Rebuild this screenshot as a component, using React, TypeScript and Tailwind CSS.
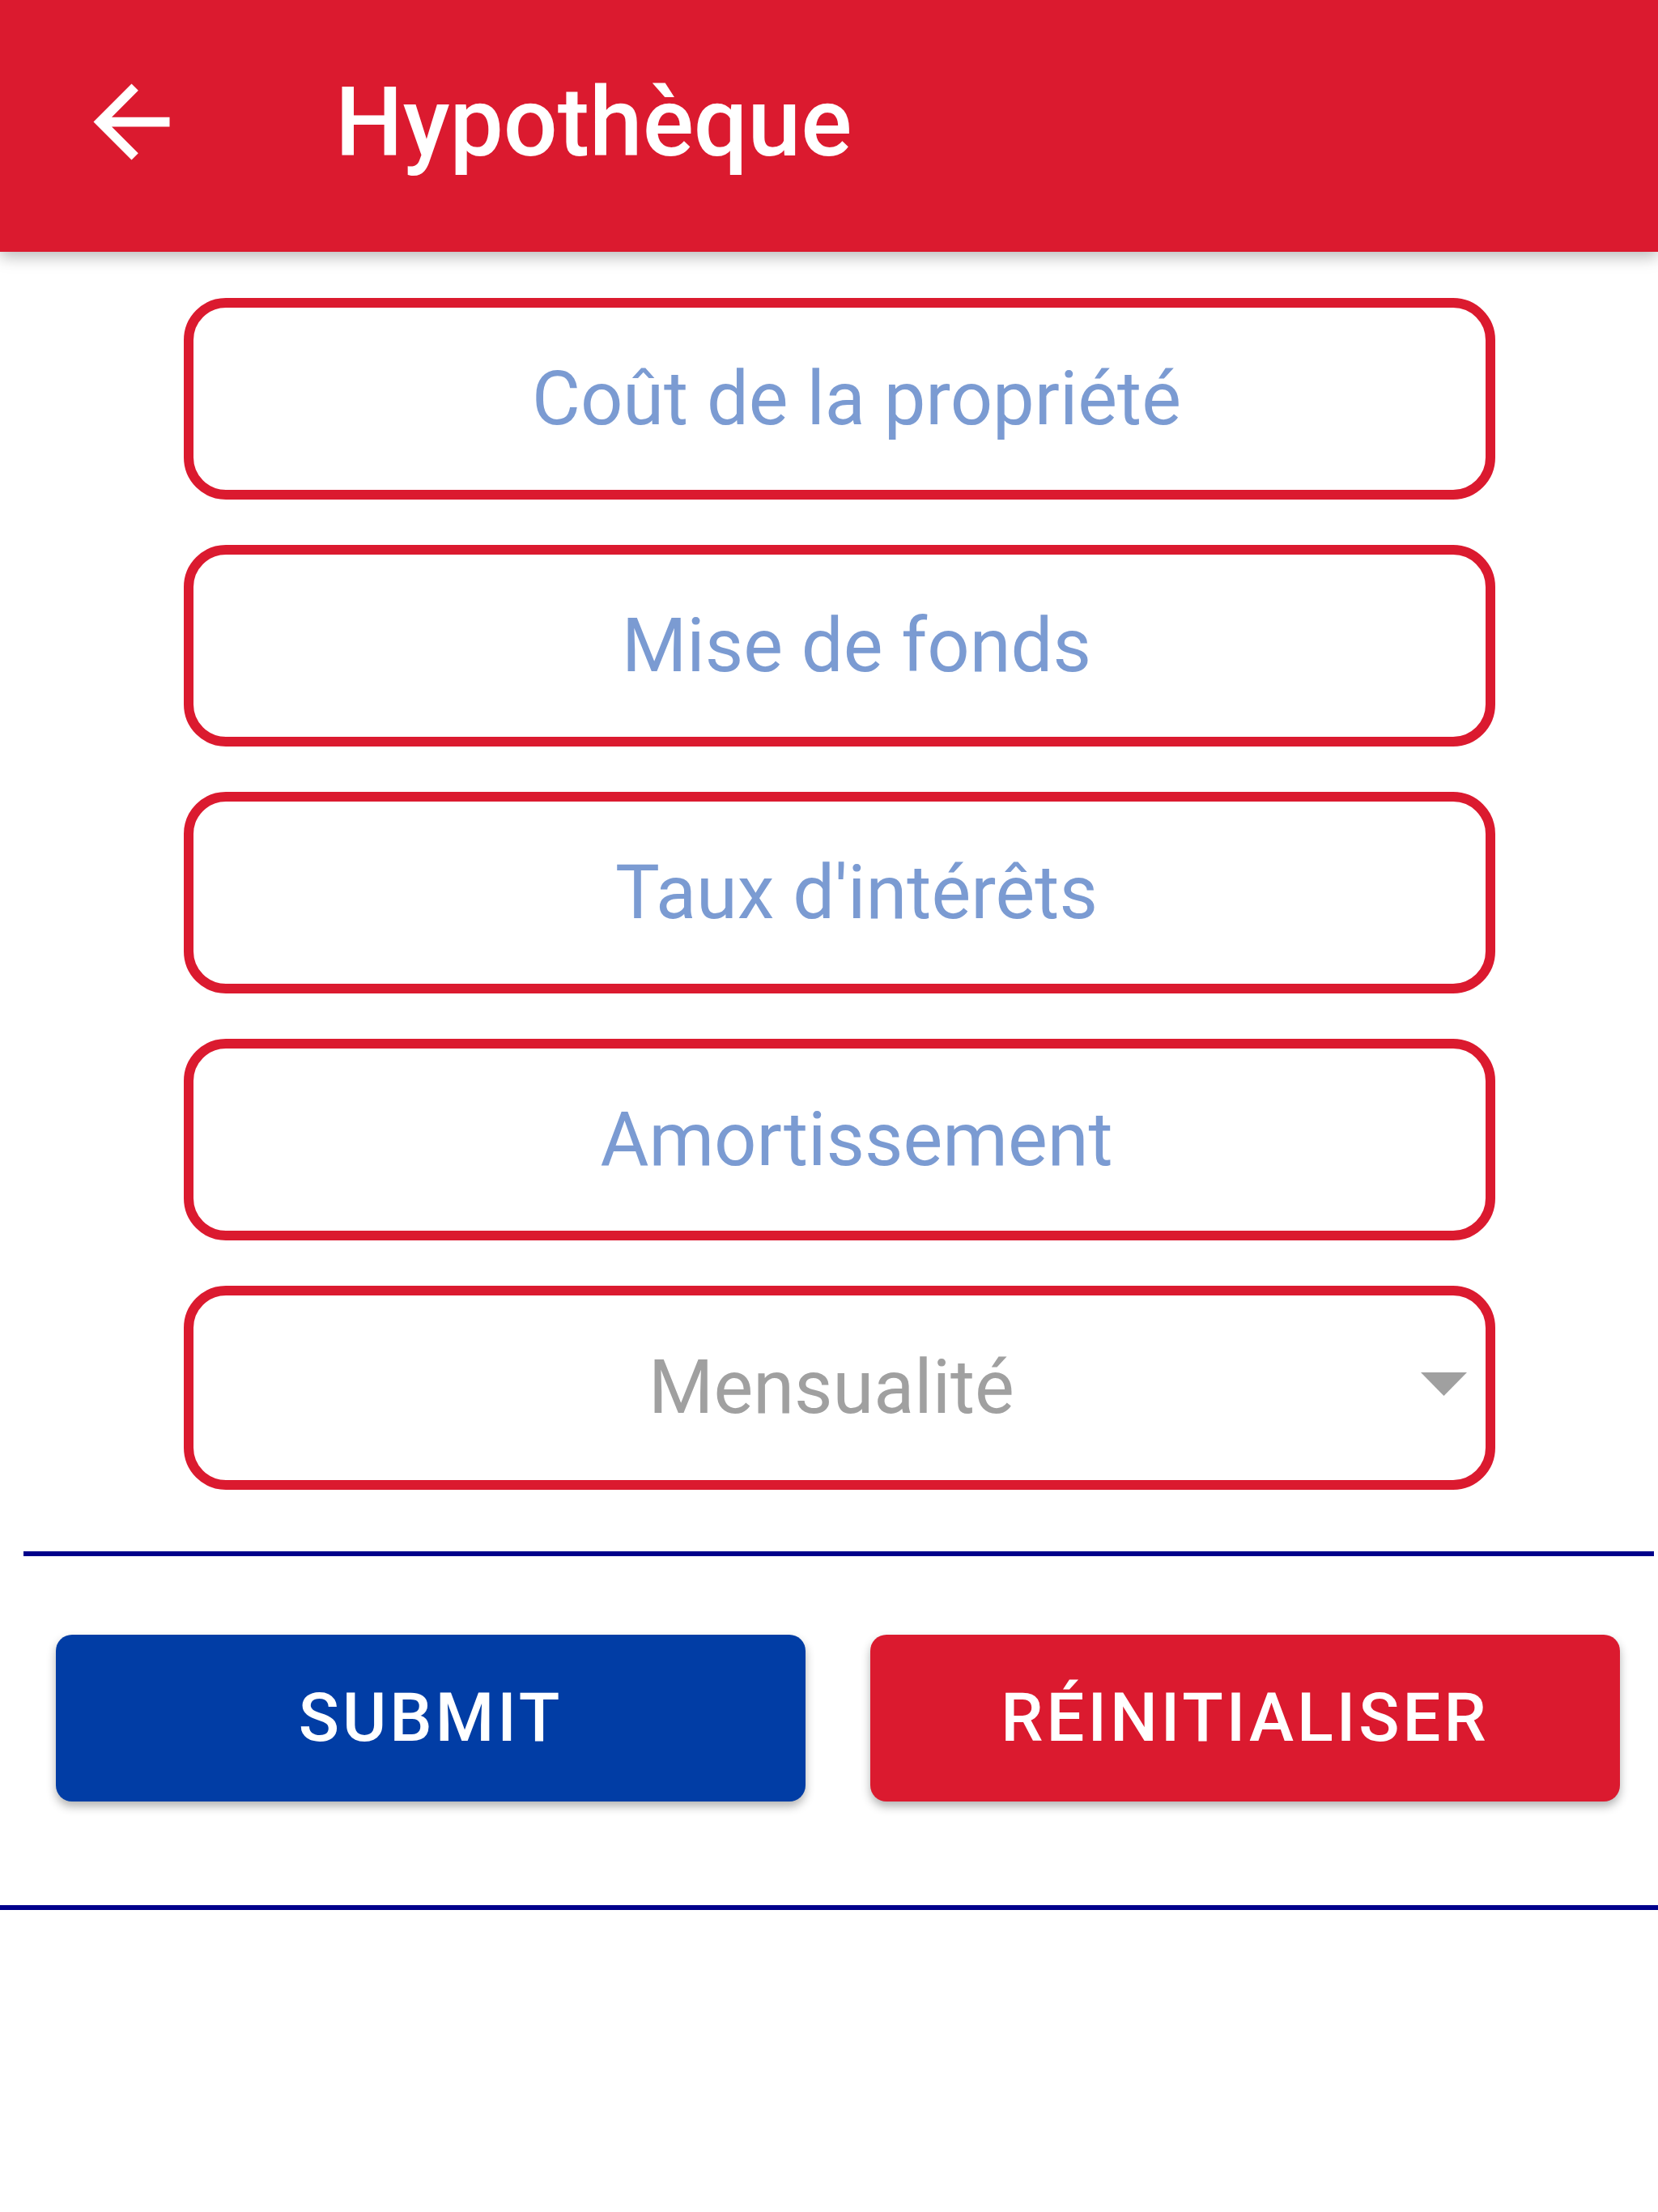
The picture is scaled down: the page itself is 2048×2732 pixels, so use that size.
import React from "react";

const fields = ["Coût de la propriété", "Mise de fonds", "Taux d'intérêts", "Amortissement"];

const BackArrow = () => (
  <svg viewBox="0 0 24 24" className="w-[141px] h-[141px] mb-[10px] fill-white" aria-hidden="true">
    <path d="M20 11H7.83l5.59-5.59L12 4l-8 8 8 8 1.41-1.41L7.83 13H20v-2z" />
  </svg>
);

const App = () => {
  return (
    <div className="w-full min-h-[2732px] bg-white font-['Roboto','Liberation_Sans',sans-serif]">
      <header className="relative z-10 h-[311px] bg-[#db1a2f] flex items-center pl-[92px] shadow-[0_6px_18px_rgba(0,0,0,0.28)]">
        <BackArrow />
        <h1 className="ml-[181px] mb-[8px] text-[118px] leading-none font-medium text-white">Hypothèque</h1>
      </header>

      <div className="ml-[227px] w-[1620px] pt-[57px] flex flex-col gap-[56px]">
        {fields.map((f) => (
          <div
            key={f}
            className="h-[249px] border-[12px] border-[#db1a2f] rounded-[52px] flex items-center justify-center pl-[42px]"
          >
            <span className="text-[92px] leading-none text-[#7b9bd2]">{f}</span>
          </div>
        ))}
        <div className="relative h-[252px] border-[12px] border-[#db1a2f] rounded-[52px] flex items-center justify-center pr-[20px]">
          <span className="text-[92px] leading-none text-[#a0a0a0]">Mensualité</span>
          <svg viewBox="0 0 57 29" className="absolute right-[23px] top-[95px] w-[57px] h-[29px] fill-[#a0a0a0]" aria-hidden="true">
            <path d="M0 0h57L28.5 29z" />
          </svg>
        </div>
      </div>

      <div className="mt-[76px] ml-[29px] mr-[5px] h-[6px] bg-[#00008b]" />

      <div className="mt-[97px] ml-[69px] flex gap-[80px]">
        <button className="w-[926px] h-[206px] rounded-[20px] bg-[#013da5] text-white text-[83px] font-medium tracking-[4px] shadow-[0_6px_12px_rgba(0,0,0,0.3)]">
          SUBMIT
        </button>
        <button className="w-[926px] h-[206px] rounded-[20px] bg-[#db1a2f] text-white text-[83px] font-medium tracking-[4px] shadow-[0_6px_12px_rgba(0,0,0,0.3)]">
          RÉINITIALISER
        </button>
      </div>

      <div className="mt-[128px] h-[6px] bg-[#00008b]" />
    </div>
  );
};

export default App;
